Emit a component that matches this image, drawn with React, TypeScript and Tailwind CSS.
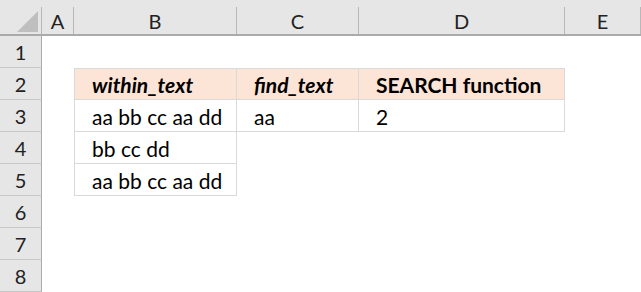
import type { ReactNode } from 'react';

const COLUMNS = ['A', 'B', 'C', 'D', 'E'];
const ROW_COUNT = 8;

type TableCell = {
  text: string;
  heading?: boolean;
  italic?: boolean;
};

// Rows 2–5 hold the little table in columns B, C and D
const table: Record<number, (TableCell | null)[]> = {
  2: [
    { text: 'within_text', heading: true, italic: true },
    { text: 'find_text', heading: true, italic: true },
    { text: 'SEARCH function', heading: true },
  ],
  3: [{ text: 'aa bb cc aa dd' }, { text: 'aa' }, { text: '2' }],
  4: [{ text: 'bb cc dd' }, null, null],
  5: [{ text: 'aa bb cc aa dd' }, null, null],
};

function ColumnHeader({ children }: { children?: ReactNode }) {
  return (
    <div className="bg-[#e6e6e6] border-b-2 border-[#ababab] pt-[7px] flex">
      <div className="flex-1 border-r border-[#b8b8b8] flex items-end justify-center pb-[3px] text-[20px] leading-none text-[#222]">
        {children}
      </div>
    </div>
  );
}

function Cell({ cell, row, col }: { cell: TableCell | null; row: number; col: number }) {
  if (!cell) return <div />;
  const top = row === 2 ? 'border-t' : '';
  const left = col === 0 ? 'border-l' : '';
  return (
    <div
      className={`${top} ${left} border-r border-b border-[#d9d9d9] flex items-end pl-[17px] pb-[4px] text-[21px] leading-none text-black whitespace-nowrap ${
        cell.heading ? 'bg-[#fce4d6] font-bold' : 'bg-white'
      } ${cell.italic ? 'italic' : ''}`}
    >
      {cell.text}
    </div>
  );
}

export default function App() {
  const rows = Array.from({ length: ROW_COUNT }, (_, i) => i + 1);

  return (
    <div
      className="w-[641px] h-[292px] overflow-hidden bg-white grid grid-cols-[42px_32px_163px_122px_206px_1fr] grid-rows-[36px_repeat(8,32px)]"
      style={{ fontFamily: 'Lato, "Open Sans", sans-serif' }}
    >
      {/* select-all corner */}
      <div className="bg-[#e6e6e6] border-b-2 border-[#ababab]">
        <svg width="42" height="34" viewBox="0 0 42 34">
          <polygon points="17,32 38,32 38,11" fill="#bfbfbf" />
          <line x1="41.5" y1="7" x2="41.5" y2="34" stroke="#b8b8b8" />
        </svg>
      </div>
      {COLUMNS.map((c) => (
        <ColumnHeader key={c}>{c}</ColumnHeader>
      ))}

      {rows.map((r) => {
        const cells = table[r] ?? [null, null, null];
        return [
          <div
            key={`h${r}`}
            className="bg-[#e6e6e6] border-r border-b border-r-[#ababab] border-b-[#c6c6c6] flex items-end justify-center pb-[5px] text-[20px] leading-none text-[#222]"
          >
            {r}
          </div>,
          <div key={`a${r}`} />,
          ...cells.map((cell, i) => <Cell key={`c${r}-${i}`} cell={cell} row={r} col={i} />),
          <div key={`e${r}`} />,
        ];
      })}
    </div>
  );
}
